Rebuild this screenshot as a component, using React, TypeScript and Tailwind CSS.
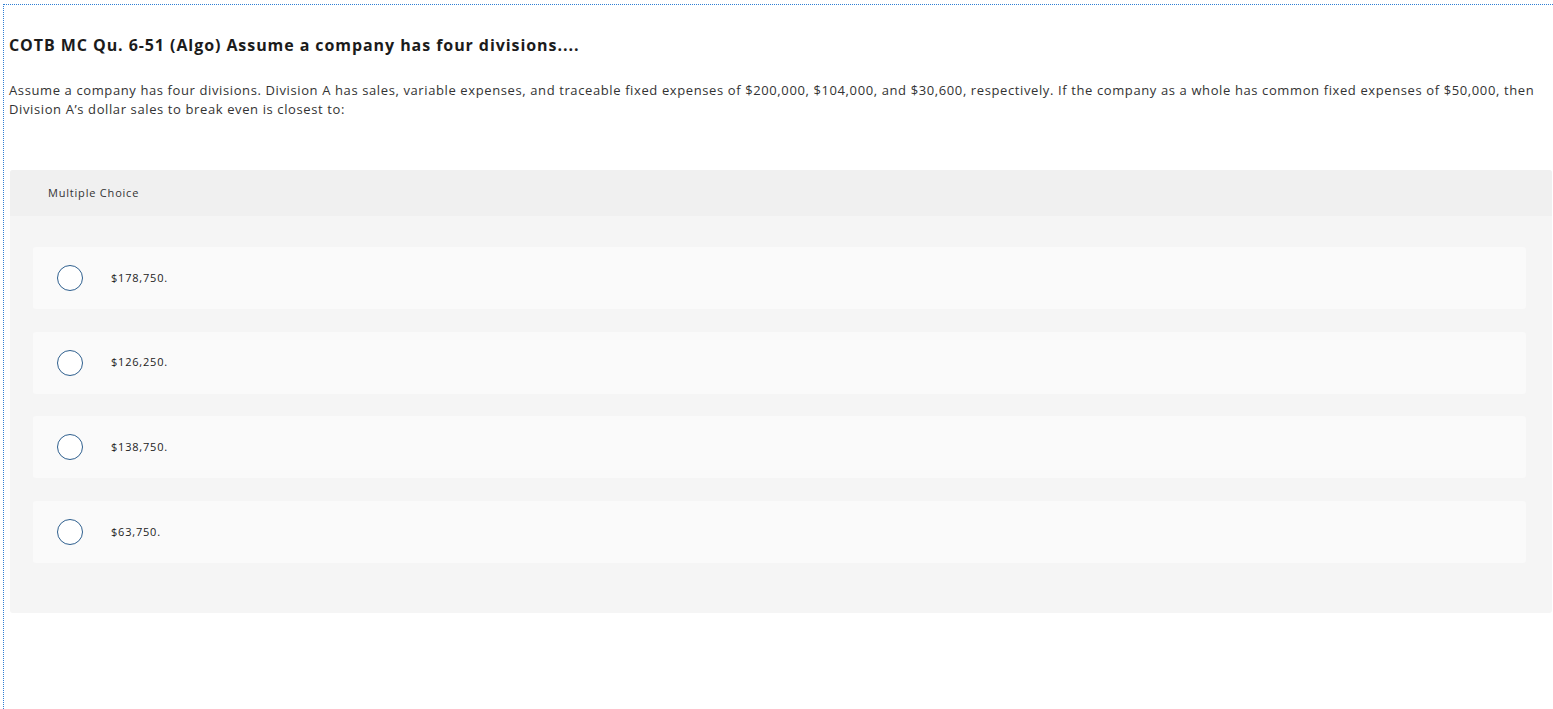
const options = ["$178,750.", "$126,250.", "$138,750.", "$63,750."];

function Choice({ label }: { label: string }) {
  return (
    <div className="flex h-[62px] items-center rounded-[3px] bg-[#fafafa] pl-[24px]">
      <span className="h-[26px] w-[26px] shrink-0 rounded-full border-[1.5px] border-[#2e5f8e] bg-white" />
      <span className="ml-[28px] text-[11px] text-[#222]">{label}</span>
    </div>
  );
}

export default function App() {
  return (
    <div className="h-[709px] w-full overflow-hidden bg-white pl-[3px] pt-1 font-['Open_Sans',sans-serif] tracking-[0.05em]">
      <div className="h-full border-l border-t border-dotted border-[#2f7fd4] pl-[5px]">
        <h1 className="mt-[30px] text-[16px] font-bold leading-[20px] tracking-[0.058em] text-[#1b1b1b]">
          COTB MC Qu. 6-51 (Algo) Assume a company has four divisions....
        </h1>
        <p className="mt-[26px] text-[13px] leading-[19px] tracking-[0.047em] text-[#333]">
          Assume a company has four divisions. Division A has sales, variable expenses, and traceable fixed
          expenses of $200,000, $104,000, and $30,600, respectively. If the company as a whole has common fixed
          expenses of $50,000, then Division A’s dollar sales to break even is closest to:
        </p>
        <div className="ml-px mr-px mt-[51px] rounded-[3px] bg-[#f5f5f5]">
          <div className="flex h-[46px] items-center rounded-t-[3px] bg-[#f0f0f0] pl-[38px] text-[11px] text-[#333]">
            Multiple Choice
          </div>
          <div className="flex flex-col gap-[22.7px] pb-[50px] pl-[23px] pr-[26px] pt-[31px]">
            {options.map((o) => (
              <Choice key={o} label={o} />
            ))}
          </div>
        </div>
      </div>
    </div>
  );
}
